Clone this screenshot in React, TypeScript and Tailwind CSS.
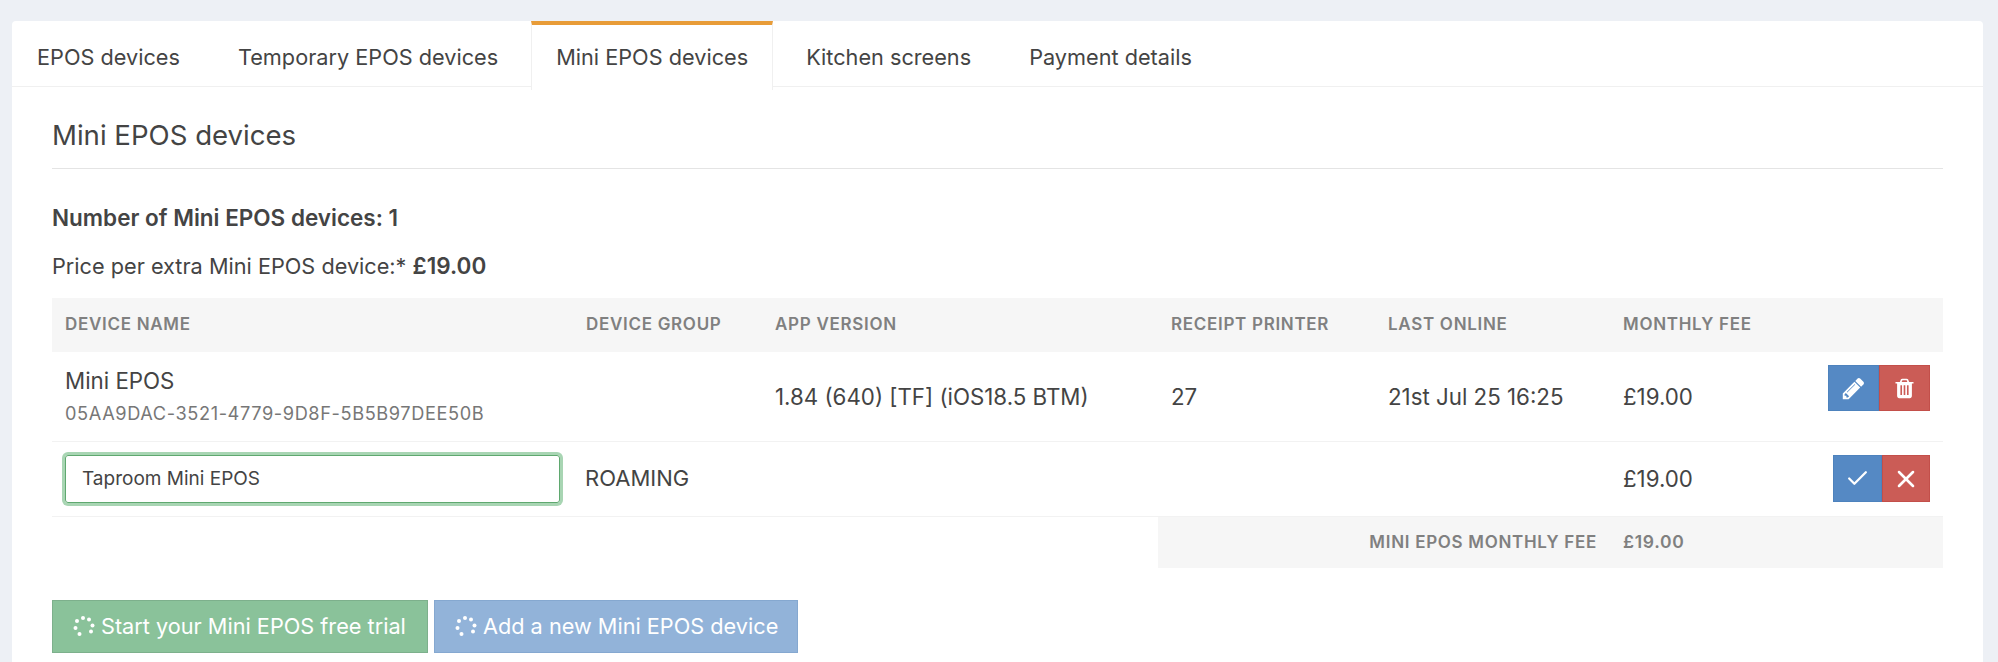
import { Check, X } from "lucide-react";

const tabs = ["EPOS devices", "Temporary EPOS devices", "Mini EPOS devices", "Kitchen screens", "Payment details"];

function PencilIcon() {
  return (
    <svg width="25" height="25" viewBox="0 0 1792 1792" fill="#fff">
      <path d="M491 1536l91-91-235-235-91 91v107h128v128h107zm523-928q0-22-22-22-10 0-17 7l-542 542q-7 7-7 17 0 22 22 22 10 0 17-7l542-542q7-7 7-17zm-54-192l416 416-832 832h-416v-416zm683 96q0 53-37 90l-166 166-416-416 166-165q36-38 90-38 53 0 91 38l235 234q37 39 37 91z" />
    </svg>
  );
}

function TrashIcon() {
  return (
    <svg width="23" height="23" viewBox="0 0 1792 1792" fill="#fff">
      <path d="M704 1376v-704q0-14-9-23t-23-9h-64q-14 0-23 9t-9 23v704q0 14 9 23t23 9h64q14 0 23-9t9-23zm256 0v-704q0-14-9-23t-23-9h-64q-14 0-23 9t-9 23v704q0 14 9 23t23 9h64q14 0 23-9t9-23zm256 0v-704q0-14-9-23t-23-9h-64q-14 0-23 9t-9 23v704q0 14 9 23t23 9h64q14 0 23-9t9-23zm-544-992h448l-48-117q-7-9-17-11h-317q-10 2-17 11zm928 32v64q0 14-9 23t-23 9h-96v948q0 83-47 143.500t-113 60.500h-832q-66 0-113-58.500t-47-141.500v-952h-96q-14 0-23-9t-9-23v-64q0-14 9-23t23-9h309l70-167q15-37 54-63t79-26h320q40 0 79 26t54 63l70 167h309q14 0 23 9t9 23z" />
    </svg>
  );
}

function Spinner() {
  return (
    <svg width="23" height="23" viewBox="0 0 23 23" fill="#fff" className="mr-[5px] shrink-0">
      <circle cx="4" cy="6" r="2" />
      <circle cx="10" cy="3" r="2" />
      <circle cx="16" cy="4.500" r="2" />
      <circle cx="19.500" cy="10.500" r="2" />
      <circle cx="18" cy="16.500" r="2" />
      <circle cx="6.500" cy="19" r="2" />
      <circle cx="2.500" cy="13" r="2" />
    </svg>
  );
}

export default function App() {
  return (
    <div className="h-[662px] overflow-hidden bg-[#edf0f5] px-3 pt-[21px] font-['Inter',sans-serif] text-[#444]">
      <div className="mr-[3px] h-[700px] rounded-t-[4px] bg-white">
        <div className="flex h-[66px] gap-2 border-b border-[#f0f0f0]">
          {tabs.map((t, i) => (
            <div
              key={t}
              className={
                i === 2
                  ? "flex h-[69px] items-center border-x border-t-4 border-x-[#f0f0f0] border-t-[#e89c38] bg-white px-6 text-[21.7px]"
                  : "flex h-[66px] items-center px-[25px] pt-[6px] text-[21.7px]"
              }
            >
              {t}
            </div>
          ))}
        </div>
        <div className="px-10">
          <h2 className="border-b border-[#e4e4e4] pt-[28px] pb-[12px] text-[27.6px] leading-[41px]">Mini EPOS devices</h2>
          <p className="mt-[34px] text-[22.5px] leading-[30px] font-semibold">Number of Mini EPOS devices: 1</p>
          <p className="mt-[18px] text-[21.7px] leading-[30px]">
            Price per extra Mini EPOS device:* <b className="text-[22.5px] font-semibold">£19.00</b>
          </p>
          <table className="mt-[17px] w-full table-fixed border-collapse">
            <colgroup>
              <col className="w-[521px]" />
              <col className="w-[189px]" />
              <col className="w-[396px]" />
              <col className="w-[217px]" />
              <col className="w-[235px]" />
              <col className="w-[160px]" />
              <col />
            </colgroup>
            <thead>
              <tr className="h-[54px] bg-[#f6f6f6] text-left text-[17px] tracking-[0.7px] text-[#808080] uppercase">
                <th className="pl-[13px] font-semibold">Device name</th>
                <th className="pl-[13px] font-semibold">Device group</th>
                <th className="pl-[13px] font-semibold">App version</th>
                <th className="pl-[13px] font-semibold">Receipt printer</th>
                <th className="pl-[13px] font-semibold">Last online</th>
                <th className="pl-[13px] font-semibold">Monthly fee</th>
                <th />
              </tr>
            </thead>
            <tbody className="text-[22.3px]">
              <tr className="h-[89px] border-b border-[#f2f2f2]">
                <td className="pl-[13px]">
                  <div className="leading-[30px]">Mini EPOS</div>
                  <div className="mt-[4px] text-[18.2px] leading-[26px] tracking-[0.6px] text-[#777]">05AA9DAC-3521-4779-9D8F-5B5B97DEE50B</div>
                </td>
                <td />
                <td className="pl-[13px]">1.84 (640) [TF] (iOS18.5 BTM)</td>
                <td className="pl-[13px]">27</td>
                <td className="pl-[13px] whitespace-nowrap">21st Jul 25 16:25</td>
                <td className="pl-[13px]">£19.00</td>
                <td className="align-top">
                  <div className="flex justify-end pt-[13px] pr-[13px]">
                    <button className="flex h-[46px] w-[51px] items-center justify-center border border-[#4d82bd] bg-[#5589c4]">
                      <PencilIcon />
                    </button>
                    <button className="flex h-[46px] w-[51px] items-center justify-center border border-[#c34f4a] bg-[#cb5c56]">
                      <TrashIcon />
                    </button>
                  </div>
                </td>
              </tr>
              <tr className="h-[75px] border-b border-[#f2f2f2]">
                <td className="pl-[13px]">
                  <input
                    readOnly
                    value="Taproom Mini EPOS"
                    className="h-[48px] w-[495px] rounded-[3px] border border-[#5fa86f] pl-[16px] text-[19px] text-[#444] shadow-[0_0_0_3px_#a8d5b3] outline-none"
                  />
                </td>
                <td className="pl-[12px] text-[22px]">ROAMING</td>
                <td />
                <td />
                <td />
                <td className="pl-[13px]">£19.00</td>
                <td>
                  <div className="flex justify-end pr-[13px]">
                    <button className="flex h-[47px] w-[49px] items-center justify-center border border-[#4d82bd] bg-[#5589c4] text-white">
                      <Check size={25} strokeWidth={2.2} />
                    </button>
                    <button className="flex h-[47px] w-[48px] items-center justify-center border border-[#c34f4a] bg-[#cb5c56] text-white">
                      <X size={28} strokeWidth={2.2} />
                    </button>
                  </div>
                </td>
              </tr>
              <tr className="h-[52px] text-[17px] font-semibold tracking-[0.7px] text-[#808080]">
                <td colSpan={3} />
                <td colSpan={2} className="bg-[#f6f6f6] pr-[13px] text-right uppercase">Mini EPOS monthly fee</td>
                <td className="bg-[#f6f6f6] pl-[13px] text-[17.5px]">£19.00</td>
                <td className="bg-[#f6f6f6]" />
              </tr>
            </tbody>
          </table>
          <div className="mt-[32px] flex gap-[6px]">
            <button className="flex h-[53px] w-[376px] items-center border border-[#7db08c] bg-[#8ac29a] pl-[20px] text-[21.7px] text-white">
              <Spinner />
              Start your Mini EPOS free trial
            </button>
            <button className="flex h-[53px] w-[364px] items-center border border-[#85a8d0] bg-[#92b3d9] pl-[20px] text-[21.7px] text-white">
              <Spinner />
              Add a new Mini EPOS device
            </button>
          </div>
        </div>
      </div>
    </div>
  );
}
